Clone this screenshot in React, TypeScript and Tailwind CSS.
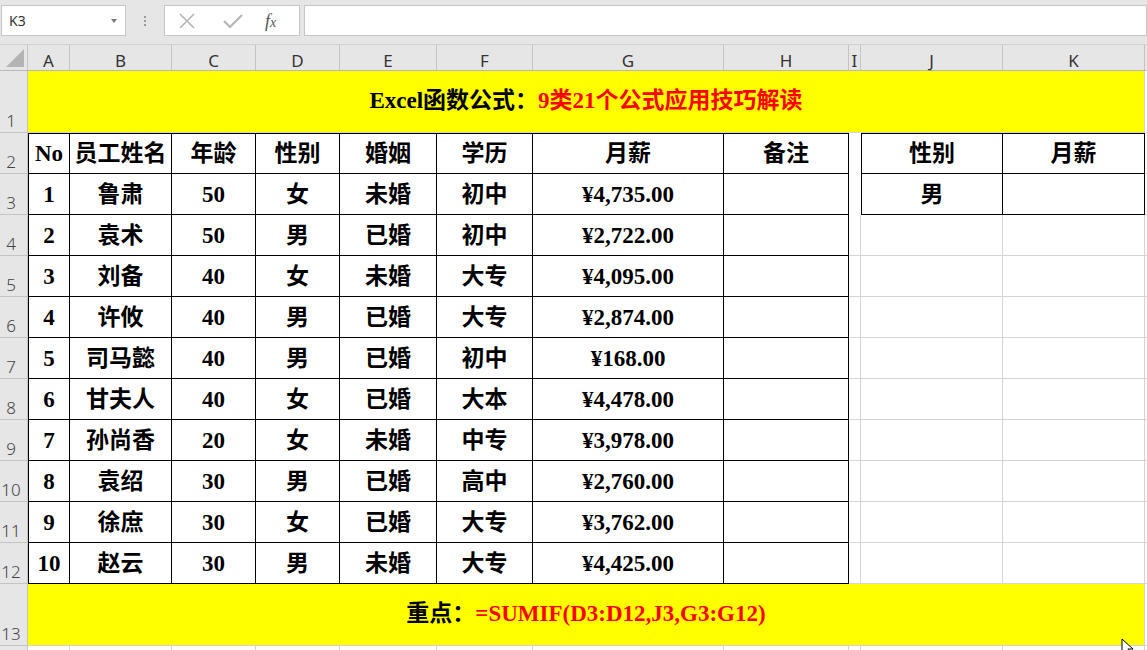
const cols = ['A', 'B', 'C', 'D', 'E', 'F', 'G', 'H', 'I', 'J', 'K']

const gridCols =
  'grid grid-cols-[28px_42px_102px_84px_84px_97px_96px_191px_125px_12px_142px_142px_1fr]'

const serif = "font-['Liberation_Serif','Noto_Sans_CJK_SC',serif] font-bold text-[23px] text-black"
const sans = "font-['Noto_Sans','Liberation_Sans',sans-serif]"

const data: (string | number)[][] = [
  [1, '鲁肃', 50, '女', '未婚', '初中', '¥4,735.00'],
  [2, '袁术', 50, '男', '已婚', '初中', '¥2,722.00'],
  [3, '刘备', 40, '女', '未婚', '大专', '¥4,095.00'],
  [4, '许攸', 40, '男', '已婚', '大专', '¥2,874.00'],
  [5, '司马懿', 40, '男', '已婚', '初中', '¥168.00'],
  [6, '甘夫人', 40, '女', '已婚', '大本', '¥4,478.00'],
  [7, '孙尚香', 20, '女', '未婚', '中专', '¥3,978.00'],
  [8, '袁绍', 30, '男', '已婚', '高中', '¥2,760.00'],
  [9, '徐庶', 30, '女', '已婚', '大专', '¥3,762.00'],
  [10, '赵云', 30, '男', '未婚', '大专', '¥4,425.00'],
]

function RowHead({ n }: { n: number }) {
  return (
    <div
      className={`${sans} bg-[#e6e6e6] border-r border-b border-[#c4c4c4] text-[17px] text-[#444] font-light leading-none flex items-end justify-center pr-[5px] pb-[3px]`}
    >
      {n}
    </div>
  )
}

function Toolbar() {
  return (
    <div className="h-[45px] bg-[#e6e6e6] border-b border-[#d0d0d0] flex items-start pt-[5px]">
      <div
        className={`${sans} ml-[1px] w-[125px] h-[31px] bg-white border border-[#c6c6c6] flex items-center justify-between pl-[7px] pr-[8px] text-[14px] text-[#333]`}
      >
        <span>K3</span>
        <span className="w-0 h-0 border-l-[3px] border-r-[3px] border-t-[4px] border-l-transparent border-r-transparent border-t-[#777]" />
      </div>
      <div className="w-[38px] h-[31px] flex flex-col items-center justify-center gap-[2px]">
        <span className="w-[2px] h-[2px] bg-[#999]" />
        <span className="w-[2px] h-[2px] bg-[#999]" />
        <span className="w-[2px] h-[2px] bg-[#999]" />
      </div>
      <div className="w-[136px] h-[31px] bg-white border border-[#c6c6c6] flex items-center">
        <svg width="20" height="20" viewBox="0 0 20 20" className="ml-[12px]">
          <path d="M3 3 L17 17 M17 3 L3 17" stroke="#b5b5b5" strokeWidth="1.6" fill="none" />
        </svg>
        <svg width="22" height="20" viewBox="0 0 22 20" className="ml-[25px]">
          <path d="M2 10 L8 16 L20 4" stroke="#b5b5b5" strokeWidth="2.2" fill="none" />
        </svg>
        <span className="ml-[21px] font-['Liberation_Serif',serif] italic text-[18px] text-[#555] leading-none">
          f<span className="text-[14px]">x</span>
        </span>
      </div>
      <div className="ml-[4px] flex-1 h-[31px] bg-white border border-[#c6c6c6]" />
    </div>
  )
}

function ColumnHeader() {
  return (
    <div className={`${gridCols} h-[26px] bg-[#e6e6e6] border-b border-[#b8b8b8]`}>
      <div className="relative border-r border-[#c4c4c4]">
        <svg width="18" height="18" viewBox="0 0 18 18" className="absolute right-[3px] bottom-[3px]">
          <path d="M18 0 L18 18 L0 18 Z" fill="#b4b4b4" />
        </svg>
      </div>
      {cols.map(c => (
        <div
          key={c}
          className={`${sans} border-r border-[#c4c4c4] flex items-end justify-center pb-[1px] text-[17px] text-[#333] leading-none`}
        >
          {c}
        </div>
      ))}
      <div />
    </div>
  )
}

function TitleRow({ n, children }: { n: number; children: React.ReactNode }) {
  return (
    <div className={`${gridCols} h-[62px]`}>
      <RowHead n={n} />
      <div className="col-span-11 bg-[#ffff00] border-b border-r border-[#d4d4d4] flex items-center justify-center">
        <div className={serif}>{children}</div>
      </div>
      <div className="border-b border-[#d4d4d4]" />
    </div>
  )
}

function Cell({ children, className = '' }: { children?: React.ReactNode; className?: string }) {
  return <div className={`${serif} flex items-center justify-center leading-none ${className}`}>{children}</div>
}

function TableRow({ n, values }: { n: number; values: (string | number)[] }) {
  const top = n === 2 ? 'border-t' : ''
  const black = `border-r border-b border-black ${top}`
  const jk = n <= 3
  const grid = 'border-r border-b border-[#d4d4d4]'
  return (
    <div className={`${gridCols} h-[41px]`}>
      <RowHead n={n} />
      {values.slice(0, 8).map((v, i) => (
        <Cell key={i} className={`${black} ${i === 0 ? 'border-l' : ''}`}>
          {v}
        </Cell>
      ))}
      <Cell className={jk ? '' : grid} />
      <Cell className={jk ? `border-l ${black}` : grid}>{values[8]}</Cell>
      <Cell className={jk ? black : grid}>{values[9]}</Cell>
      <div className="border-b border-[#d4d4d4]" />
    </div>
  )
}

export default function App() {
  const header = ['No', '员工姓名', '年龄', '性别', '婚姻', '学历', '月薪', '备注', '性别', '月薪']
  return (
    <div className="relative w-[1147px] h-[650px] overflow-hidden bg-white">
      <Toolbar />
      <ColumnHeader />
      <TitleRow n={1}>
        Excel函数公式：<span className="text-[#ff0000]">9类21个公式应用技巧解读</span>
      </TitleRow>
      <TableRow n={2} values={header} />
      {data.map((r, i) => (
        <TableRow key={i} n={i + 3} values={[...r, '', i === 0 ? '男' : '', '']} />
      ))}
      <TitleRow n={13}>
        重点：<span className="text-[#ff0000]">=SUMIF(D3:D12,J3,G3:G12)</span>
      </TitleRow>
      <div className={`${gridCols} h-[20px]`}>
        <div className="bg-[#e6e6e6] border-r border-[#c4c4c4]" />
        {cols.map(c => (
          <div key={c} className="border-r border-[#d4d4d4]" />
        ))}
      </div>
      <svg width="14" height="20" viewBox="0 0 14 20" className="absolute left-[1121px] top-[638px]">
        <path d="M1 1 L1 16 L5 12 L8 19 L10 18 L7 11 L12 11 Z" fill="#fff" stroke="#000" strokeWidth="1" />
      </svg>
    </div>
  )
}
